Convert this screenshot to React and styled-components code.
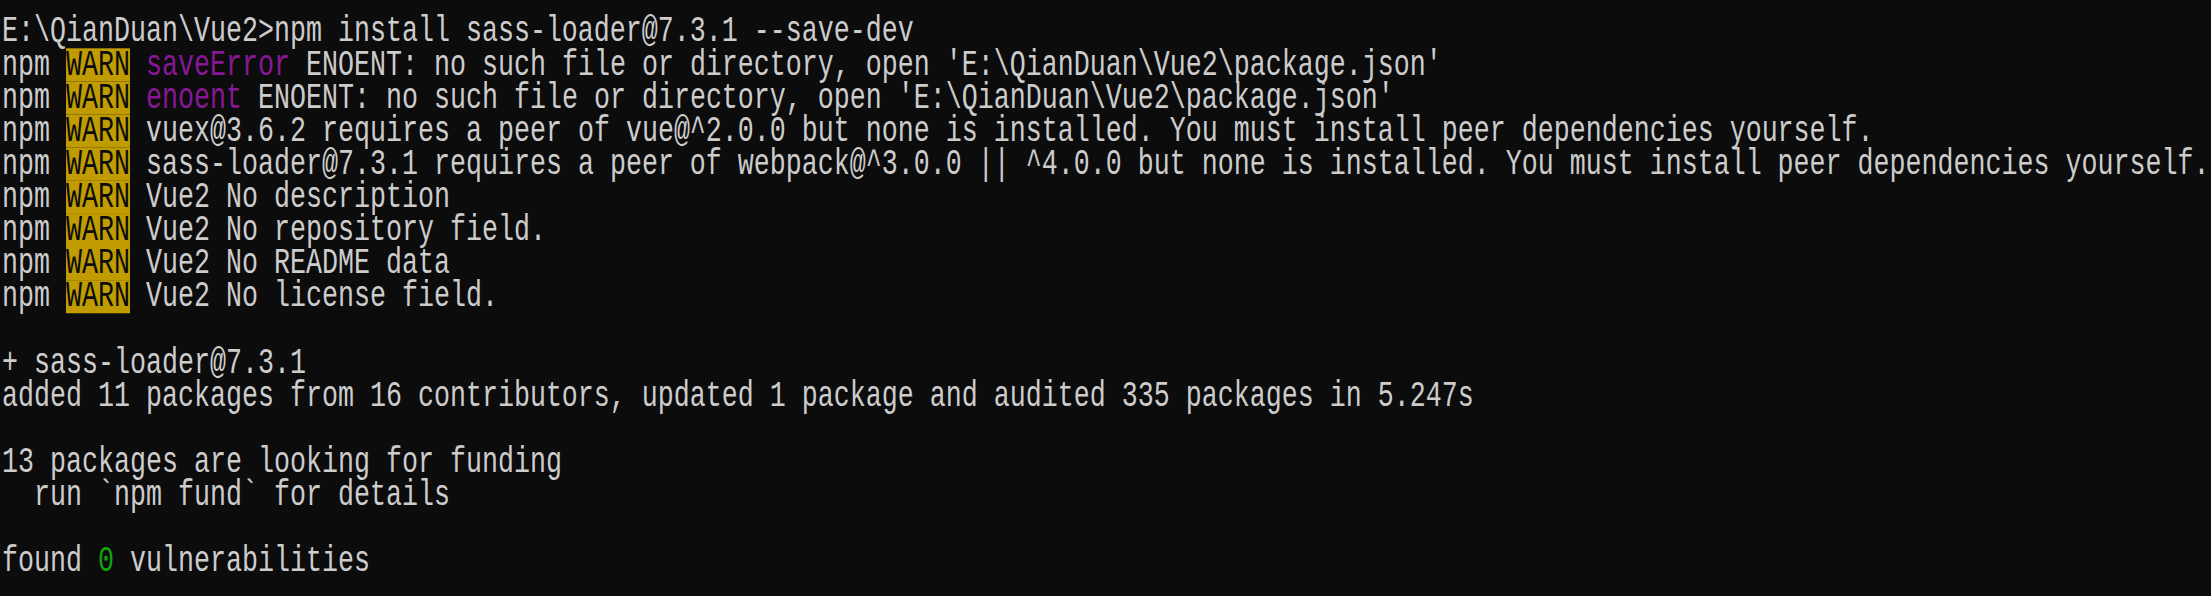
import React from 'react';
import styled, { createGlobalStyle } from 'styled-components';

const GlobalStyle = createGlobalStyle`
  html {
    background: #0c0c0c;
    overflow: hidden;
  }
  body {
    margin: 0;
    padding: 0;
    min-height: 596px;
    background: #0c0c0c;
  }
`;

const lines = [
  { text: 'E:\\QianDuan\\Vue2>npm install sass-loader@7.3.1 --save-dev' },
  { warn: true, tag: 'saveError', text: " ENOENT: no such file or directory, open 'E:\\QianDuan\\Vue2\\package.json'" },
  { warn: true, tag: 'enoent', text: " ENOENT: no such file or directory, open 'E:\\QianDuan\\Vue2\\package.json'" },
  { warn: true, text: ' vuex@3.6.2 requires a peer of vue@^2.0.0 but none is installed. You must install peer dependencies yourself.' },
  { warn: true, text: ' sass-loader@7.3.1 requires a peer of webpack@^3.0.0 || ^4.0.0 but none is installed. You must install peer dependencies yourself.' },
  { warn: true, text: ' Vue2 No description' },
  { warn: true, text: ' Vue2 No repository field.' },
  { warn: true, text: ' Vue2 No README data' },
  { warn: true, text: ' Vue2 No license field.' },
  { text: '' },
  { text: '+ sass-loader@7.3.1' },
  { text: 'added 11 packages from 16 contributors, updated 1 package and audited 335 packages in 5.247s' },
  { text: '' },
  { text: '13 packages are looking for funding' },
  { text: '  run `npm fund` for details' },
  { text: '' },
  { found: true },
];

export default function App() {
  return (
    <>
      <GlobalStyle />
      <Screen>
        {lines.map((line, i) => (
          <Line key={i}>
            {line.warn && (
              <>
                npm <Warn>WARN</Warn>
                {line.tag && <Tag> {line.tag}</Tag>}
              </>
            )}
            {line.found ? (
              <>
                found <Ok>0</Ok> vulnerabilities
              </>
            ) : (
              line.text
            )}
          </Line>
        ))}
      </Screen>
    </>
  );
}

// terminal cells are 16px wide and ~33px tall; the mono font is stretched
// vertically to get the tall narrow console glyphs
const Screen = styled.div`
  padding: 10.5px 0 0 2px;
  font-family: 'Liberation Mono', 'DejaVu Sans Mono', monospace;
  font-size: 26.667px;
  color: #cccccc;
  transform: scaleY(1.38);
  transform-origin: 0 0;
`;

const Line = styled.div`
  height: 24.02px;
  line-height: 24.02px;
  white-space: pre;
`;

const Warn = styled.span`
  display: inline-block;
  height: 24.02px;
  vertical-align: top;
  background: #c19c00;
  color: #0c0c0c;
`;

const Tag = styled.span`
  color: #881798;
`;

const Ok = styled.span`
  color: #13a10e;
`;
